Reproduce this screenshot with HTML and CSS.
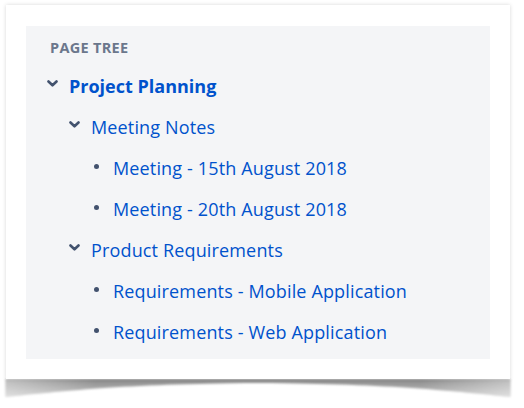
FILE: index.html
```html
<!DOCTYPE html>
<html lang="en">
<head>
<meta charset="utf-8">
<title>Page Tree</title>
<link rel="stylesheet" href="styles.css">
</head>
<body>
<div class="frame">
  <div class="card">
    <nav class="tree">
      <h2 class="tree-title">PAGE TREE</h2>
      <ul class="tree-list">
        <li class="row lvl-0">
          <span class="icon chevron"><svg viewBox="0 0 11 7" width="11" height="7"><path d="M1.5 1.5 L5.5 5.3 L9.5 1.5"/></svg></span>
          <a class="label current" href="#">Project Planning</a>
        </li>
        <li class="row lvl-1">
          <span class="icon chevron"><svg viewBox="0 0 11 7" width="11" height="7"><path d="M1.5 1.5 L5.5 5.3 L9.5 1.5"/></svg></span>
          <a class="label" href="#">Meeting Notes</a>
        </li>
        <li class="row lvl-2">
          <span class="icon bullet"></span>
          <a class="label" href="#">Meeting - 15th August 2018</a>
        </li>
        <li class="row lvl-2">
          <span class="icon bullet"></span>
          <a class="label" href="#">Meeting - 20th August 2018</a>
        </li>
        <li class="row lvl-1">
          <span class="icon chevron"><svg viewBox="0 0 11 7" width="11" height="7"><path d="M1.5 1.5 L5.5 5.3 L9.5 1.5"/></svg></span>
          <a class="label" href="#">Product Requirements</a>
        </li>
        <li class="row lvl-2">
          <span class="icon bullet"></span>
          <a class="label" href="#">Requirements - Mobile Application</a>
        </li>
        <li class="row lvl-2">
          <span class="icon bullet"></span>
          <a class="label" href="#">Requirements - Web Application</a>
        </li>
      </ul>
    </nav>
  </div>
  <svg class="curl" viewBox="0 0 508 24" width="508" height="24">
    <defs>
      <linearGradient id="shade" x1="0" y1="0" x2="0" y2="18" gradientUnits="userSpaceOnUse">
        <stop offset="0" stop-color="#888888"/>
        <stop offset="1" stop-color="#c8c8c8"/>
      </linearGradient>
      <linearGradient id="edge" x1="0" y1="0" x2="508" y2="0" gradientUnits="userSpaceOnUse">
        <stop offset="0" stop-color="#fff" stop-opacity="0.45"/>
        <stop offset="0.18" stop-color="#fff" stop-opacity="0"/>
        <stop offset="0.82" stop-color="#fff" stop-opacity="0"/>
        <stop offset="1" stop-color="#fff" stop-opacity="0.45"/>
      </linearGradient>
      <filter id="soft" x="-5%" y="-50%" width="110%" height="200%">
        <feGaussianBlur stdDeviation="1.2"/>
      </filter>
    </defs>
    <g filter="url(#soft)">
      <path d="M1.5 0 L1.5 18 C56 12.5 116 5 254 4 C392 5 452 12.5 506.5 18 L506.5 0 Z" fill="url(#shade)"/>
      <path d="M1.5 0 L1.5 18 C56 12.5 116 5 254 4 C392 5 452 12.5 506.5 18 L506.5 0 Z" fill="url(#edge)"/>
    </g>
  </svg>
</div>
</body>
</html>
```

FILE: styles.css
```css
* {
  box-sizing: border-box;
}

html, body {
  margin: 0;
  padding: 0;
  background: #ffffff;
}

body {
  font-family: "Open Sans", "Noto Sans", sans-serif;
  color: #172b4d;
}

.frame {
  width: 504px;
  margin: 5px 0 0 6px;
}

.card {
  position: relative;
  z-index: 1;
  background: #ffffff;
  padding: 21px 20px 20px 20px;
  box-shadow: 0 0 4px rgba(0, 0, 0, 0.16);
}

.tree {
  background: #f4f5f7;
  padding: 12px 0 6px 0;
}

.tree-title {
  margin: 0 0 8px 24px;
  font-size: 14.5px;
  line-height: 20px;
  font-weight: 700;
  color: #6b778c;
  letter-spacing: 0.3px;
}

.tree-list {
  list-style: none;
  margin: 0;
  padding: 0;
}

.row {
  display: flex;
  align-items: flex-start;
  height: 41px;
  line-height: 40px;
  font-size: 18px;
}

.lvl-0 { padding-left: 18px; }
.lvl-1 { padding-left: 40px; }
.lvl-2 { padding-left: 62px; }

.icon {
  flex: 0 0 16px;
  width: 16px;
  margin-right: 9px;
  display: flex;
  justify-content: center;
}

.chevron {
  height: 7px;
  margin-top: 14px;
}

.chevron svg {
  display: block;
}

.chevron path {
  fill: none;
  stroke: #42526e;
  stroke-width: 2.6;
  stroke-linecap: round;
  stroke-linejoin: round;
}

.bullet {
  height: 5px;
  margin-top: 16px;
}

.bullet::before {
  content: "";
  width: 5px;
  height: 5px;
  border-radius: 50%;
  background: #42526e;
}

.label {
  color: #0052cc;
  text-decoration: none;
  white-space: nowrap;
  letter-spacing: 0.15px;
}

.label.current {
  font-weight: 700;
  letter-spacing: 0;
}

.curl {
  display: block;
  margin-left: -2px;
  overflow: visible;
}
```
